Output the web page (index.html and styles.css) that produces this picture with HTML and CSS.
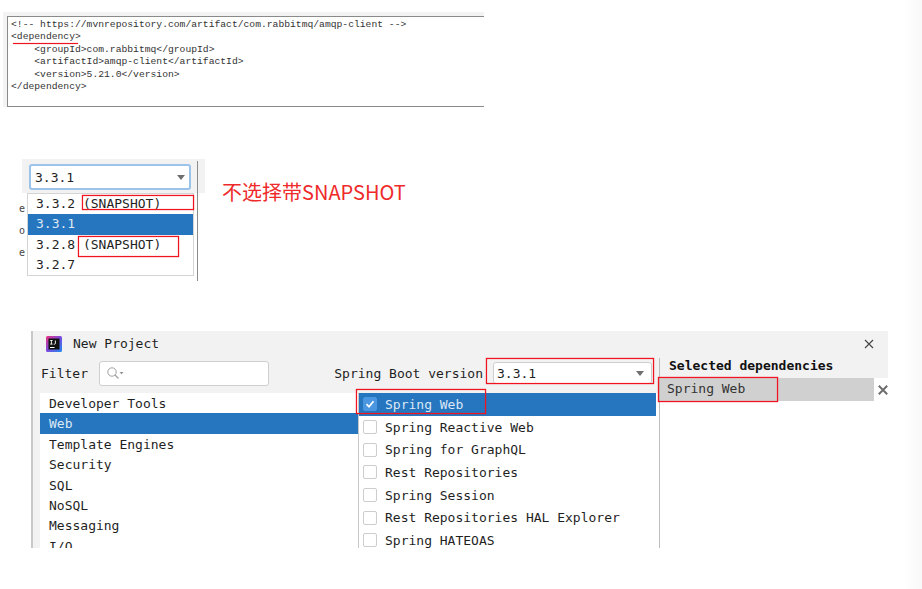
FILE: index.html
```html
<!DOCTYPE html>
<html lang="zh">
<head>
<meta charset="utf-8">
<title>Spring Boot dependency notes</title>
<link rel="stylesheet" href="styles.css">
</head>
<body>
<section class="shot code-shot">
  <pre class="code">&lt;!-- https://mvnrepository.com/artifact/com.rabbitmq/amqp-client --&gt;
&lt;dependency&gt;
    &lt;groupId&gt;com.rabbitmq&lt;/groupId&gt;
    &lt;artifactId&gt;amqp-client&lt;/artifactId&gt;
    &lt;version&gt;5.21.0&lt;/version&gt;
&lt;/dependency&gt;</pre>
  <div class="underline"></div>
</section>

<section class="shot version-shot">
  <div class="combo combo-focus"><span>3.3.1</span><i class="caret"></i></div>
  <div class="divider"></div>
  <ul class="popup">
    <li>3.3.2 (SNAPSHOT)</li>
    <li class="sel">3.3.1</li>
    <li>3.2.8 (SNAPSHOT)</li>
    <li>3.2.7</li>
  </ul>
  <div class="frag frag1">e</div>
  <div class="frag frag2">o</div>
  <div class="frag frag3">e</div>
  <div class="mark mark-a"></div>
  <div class="mark mark-b"></div>
</section>
<p class="note">不选择带SNAPSHOT</p>

<section class="shot dialog">
  <header class="titlebar">
    <svg class="logo" width="16" height="16" viewBox="0 0 16 16" aria-hidden="true">
      <defs><linearGradient id="ij" x1="0" y1="0" x2="1" y2="1"><stop offset="0" stop-color="#f0317f"/><stop offset=".5" stop-color="#7a4be0"/><stop offset="1" stop-color="#1f8ef0"/></linearGradient></defs>
      <rect width="16" height="16" rx="1.5" fill="url(#ij)"/>
      <rect x="2.5" y="2.5" width="11" height="11" fill="#111"/>
      <rect x="4" y="11" width="4.5" height="1" fill="#fff"/>
      <path d="M4.2 4.5h2.4M5.4 4.5v3.6M4.2 8.1h2.4M9.4 4.5v2.9q0 .8-.9.8h-.8" stroke="#fff" stroke-width=".9" fill="none"/>
    </svg>
    <span class="title">New Project</span>
    <svg class="close" width="10" height="10" viewBox="0 0 10 10" aria-hidden="true"><path d="M1 1l8 8M9 1l-8 8" stroke="#444" stroke-width="1.1"/></svg>
  </header>
  <div class="columns">
    <div class="col-left">
      <div class="filter-row">
        <label>Filter</label>
        <div class="search">
          <svg width="20" height="14" viewBox="0 0 20 14" aria-hidden="true"><circle cx="6" cy="6" r="4.2" fill="none" stroke="#a0a0a0"/><path d="M9 9l3.5 3.5" stroke="#a0a0a0" stroke-width="1.2"/><path d="M13.5 6h4l-2 2.2z" fill="#909090"/></svg>
        </div>
      </div>
      <ul class="list">
        <li>Developer Tools</li>
        <li class="sel">Web</li>
        <li>Template Engines</li>
        <li>Security</li>
        <li>SQL</li>
        <li>NoSQL</li>
        <li>Messaging</li>
        <li>I/O</li>
      </ul>
    </div>
    <div class="col-mid">
      <div class="boot-row">
        <label>Spring Boot version</label>
        <div class="combo boot-combo"><span>3.3.1</span><i class="caret"></i></div>
      </div>
      <ul class="checks">
        <li class="sel"><span class="box on"><svg width="12" height="12" viewBox="0 0 12 12" aria-hidden="true"><path d="M2.5 6.2l2.5 2.6 4.5-5.6" fill="none" stroke="#fff" stroke-width="1.7"/></svg></span>Spring Web</li>
        <li><span class="box"></span>Spring Reactive Web</li>
        <li><span class="box"></span>Spring for GraphQL</li>
        <li><span class="box"></span>Rest Repositories</li>
        <li><span class="box"></span>Spring Session</li>
        <li><span class="box"></span>Rest Repositories HAL Explorer</li>
        <li><span class="box"></span>Spring HATEOAS</li>
      </ul>
    </div>
    <div class="col-right">
      <h2>Selected dependencies</h2>
      <div class="chosen-wrap">
        <div class="chosen">Spring Web</div>
        <svg class="remove" width="10" height="10" viewBox="0 0 10 10" aria-hidden="true"><path d="M.8 .8l8.4 8.4M9.2 .8l-8.4 8.4" stroke="#6e6e6e" stroke-width="2"/></svg>
      </div>
    </div>
  </div>
  <div class="mark mark-c"></div>
  <div class="mark mark-d"></div>
  <div class="mark mark-e"></div>
</section>
<div class="edge"></div>
</body>
</html>
```
FILE: styles.css
```css
* { box-sizing: border-box; }
html, body { margin: 0; padding: 0; }
body {
  position: relative;
  width: 922px;
  height: 589px;
  overflow: hidden;
  background: #fff;
  font-family: "DejaVu Sans Mono", monospace;
  color: #1f1f1f;
}
ul { list-style: none; margin: 0; padding: 0; }
.shot { position: absolute; }
.mark {
  position: absolute;
  border: 1px solid #f0141e;
  box-shadow: 0 0 1px #f0141e, inset 0 0 1px #f0141e;
}

/* code snippet */
.code-shot {
  left: 3px;
  top: 12px;
  width: 481px;
  height: 95px;
  padding: 4px 0 0 4px;
  background: #f3f3f3;
}
.code {
  height: 91px;
  margin: 0;
  padding: 2px 0 0 3px;
  background: #fff;
  border: 1px solid #8a8a8a;
  border-width: 1px 0 1px 1px;
  font: 9.7px/12.4px "Liberation Mono", "Noto Sans CJK SC", monospace;
  color: #333;
}
.underline {
  position: absolute;
  left: 10px;
  top: 31px;
  width: 65px;
  height: 1px;
  background: #f0141e;
  box-shadow: 0 0 1px #f0141e;
}

/* version dropdown */
.version-shot {
  left: 22px;
  top: 159px;
  width: 183px;
  height: 122px;
  background: linear-gradient(#f2f2f2 0, #f2f2f2 34px, #fff 34px);
}
.combo {
  display: flex;
  align-items: center;
  justify-content: space-between;
  background: #fff;
  font-size: 13px;
}
.combo-focus {
  position: absolute;
  left: 7px;
  top: 5px;
  width: 162px;
  height: 26px;
  padding: 0 4px 0 4px;
  border: 2px solid #9cc3ea;
  border-radius: 3px;
}
.caret {
  width: 0;
  height: 0;
  border-left: 4.5px solid transparent;
  border-right: 4.5px solid transparent;
  border-top: 5px solid #6f6f6f;
}
.divider {
  position: absolute;
  left: 175px;
  top: 2px;
  bottom: 0;
  width: 1px;
  background: #8c8c8c;
}
.popup {
  position: absolute;
  left: 5px;
  top: 34px;
  width: 167px;
  height: 83px;
  border: 1px solid #d4d4d4;
  background: #fff;
  font-size: 13px;
}
.popup li { height: 20.4px; line-height: 20px; padding-left: 8px; white-space: pre; }
.sel { background: #2675bf; color: #dbe8f5; }
.frag {
  position: absolute;
  left: -3px;
  font-size: 10px;
  line-height: 12px;
  color: #444;
}
.frag1 { top: 44px; }
.frag2 { top: 66px; }
.frag3 { top: 88px; }
.mark-a { left: 60px; top: 36px; width: 112px; height: 15px; }
.mark-b { left: 56px; top: 77px; width: 101px; height: 21px; }

.note {
  position: absolute;
  left: 222px;
  top: 178px;
  margin: 0;
  font: 20px/28px "Noto Sans CJK SC", "Liberation Sans", sans-serif;
  color: #ee2a2a;
}

/* new project dialog */
.dialog {
  left: 31px;
  top: 331px;
  width: 857px;
  height: 217px;
  overflow: hidden;
  background: #f2f2f2;
  border-left: 2px solid #c8c8c8;
  font-size: 13px;
}
.titlebar {
  display: flex;
  align-items: center;
  height: 24px;
  padding: 1px 14px 0 13px;
}
.logo { flex: none; }
.title { margin-left: 11px; flex: 1; }
.columns { display: flex; height: 193px; }
.col-left { width: 325px; flex: none; padding-left: 7px; }
.filter-row {
  display: flex;
  align-items: center;
  gap: 11px;
  height: 38px;
  padding: 0 0 2px 1px;
}
.search {
  display: flex;
  align-items: center;
  width: 170px;
  height: 25px;
  padding-left: 6px;
  background: #fff;
  border: 1px solid #cfcfcf;
  border-radius: 3px;
}
.list { background: #fff; height: 155px; overflow: hidden; }
.list li { height: 20.4px; line-height: 21px; padding-left: 9px; }
.col-mid { width: 301px; flex: none; }
.boot-row {
  display: flex;
  align-items: center;
  justify-content: flex-end;
  gap: 10px;
  height: 38px;
  padding: 0 7px 2px 0;
  margin-left: -60px;
}
.boot-combo {
  width: 159px;
  height: 22px;
  padding: 0 7px 0 3px;
  border: 1px solid #cfcfcf;
  border-radius: 3px;
}
.checks {
  height: 155px;
  overflow: hidden;
  padding-right: 3px;
  background: #fff;
  border-left: 1px solid #c8c8c8;
}
.checks li {
  display: flex;
  align-items: center;
  gap: 8px;
  height: 22.7px;
  padding-left: 4px;
}
.box {
  display: flex;
  align-items: center;
  justify-content: center;
  width: 14px;
  height: 14px;
  background: #fff;
  border: 1px solid #cdcdcd;
  border-radius: 2px;
}
.box.on { background: #4a96e0; border-color: #4a96e0; }
.col-right {
  flex: 1;
  min-width: 0;
  margin-top: 3px;
  background: #fff;
  border-left: 1px solid #bdbdbd;
}
.col-right h2 {
  margin: 0;
  height: 20px;
  padding: 0 0 0 9px;
  background: #f2f2f2;
  font-size: 13px;
  line-height: 16px;
  font-weight: 700;
  color: #111;
}
.chosen-wrap { display: flex; align-items: center; }
.chosen {
  flex: none;
  width: 214px;
  height: 23px;
  padding-left: 7px;
  line-height: 21px;
  background: #d0d0d0;
  color: #333;
}
.remove { flex: none; margin-left: 4px; }
.mark-c { left: 453px; top: 27px; width: 168px; height: 26px; }
.mark-d { left: 323px; top: 58px; width: 130px; height: 25px; }
.mark-e { left: 625px; top: 46px; width: 120px; height: 25px; }
.edge {
  position: absolute;
  top: 0;
  right: 0;
  width: 18px;
  height: 589px;
  background: linear-gradient(90deg, #fff, #f8f8f8);
}
```
